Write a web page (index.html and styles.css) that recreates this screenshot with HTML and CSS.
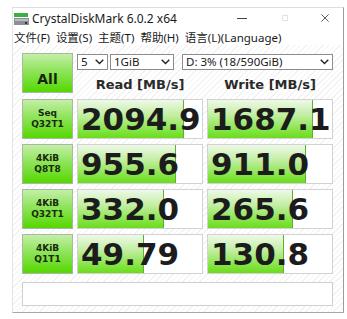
FILE: index.html
```html
<!DOCTYPE html>
<html lang="zh-CN">

<head>
  <meta charset="UTF-8">
  <meta name="viewport" content="width=device-width, initial-scale=1.0">
  <title>CrystalDiskMark 6.0.2 x64</title>
  <link rel="stylesheet" href="styles.css">
</head>

<body>
  <div class="window">
    <div class="titlebar">
      <svg class="app-icon" width="15" height="12" viewBox="0 0 15 12">
        <rect x="0" y="0" width="14" height="4" fill="#3cb043"/>
        <rect x="0" y="5" width="15" height="7" fill="#8a8f94"/>
        <rect x="1" y="6" width="13" height="2" fill="#b9bec2"/>
        <rect x="11" y="9" width="2" height="2" fill="#2f3338"/>
      </svg>
      <span class="title">CrystalDiskMark 6.0.2 x64</span>
      <div class="controls">
        <span class="ctl ctl-min"></span>
        <span class="ctl ctl-max"></span>
        <svg class="ctl-close" width="10" height="10" viewBox="0 0 10 10">
          <path d="M0.5 0.5 L9.5 9.5 M9.5 0.5 L0.5 9.5" stroke="#333" stroke-width="1"/>
        </svg>
      </div>
    </div>

    <div class="menubar">
      <span>文件(F)</span>
      <span>设置(S)</span>
      <span>主题(T)</span>
      <span>帮助(H)</span>
      <span>语言(L)(Language)</span>
    </div>

    <div class="content">
      <div class="top">
        <div class="all-button">All</div>
        <div class="top-right">
          <div class="selects">
            <div class="select select-count">5 <svg class="chevron" width="9" height="6" viewBox="0 0 9 6"><path d="M0.7 0.7 L4.5 4.5 L8.3 0.7" fill="none" stroke="#222" stroke-width="1.4"/></svg></div>
            <div class="select select-size">1GiB <svg class="chevron" width="9" height="6" viewBox="0 0 9 6"><path d="M0.7 0.7 L4.5 4.5 L8.3 0.7" fill="none" stroke="#222" stroke-width="1.4"/></svg></div>
            <div class="select select-drive">D: 3% (18/590GiB) <svg class="chevron" width="9" height="6" viewBox="0 0 9 6"><path d="M0.7 0.7 L4.5 4.5 L8.3 0.7" fill="none" stroke="#222" stroke-width="1.4"/></svg></div>
          </div>
          <div class="heads">
            <div class="head">Read [MB/s]</div>
            <div class="head">Write [MB/s]</div>
          </div>
        </div>
      </div>

      <div class="rows">
        <div class="label">Seq<br>Q32T1</div>
        <div class="value" style="--fill: 105px">2094.9</div>
        <div class="value" style="--fill: 104px">1687.1</div>

        <div class="label">4KiB<br>Q8T8</div>
        <div class="value" style="--fill: 97px">955.6</div>
        <div class="value" style="--fill: 97px">911.0</div>

        <div class="label">4KiB<br>Q32T1</div>
        <div class="value" style="--fill: 85px">332.0</div>
        <div class="value" style="--fill: 84px">265.6</div>

        <div class="label">4KiB<br>Q1T1</div>
        <div class="value" style="--fill: 65px">49.79</div>
        <div class="value" style="--fill: 75px">130.8</div>
      </div>

      <div class="comment"></div>
    </div>
  </div>
</body>

</html>
```

FILE: styles.css
```css
* {
  margin: 0;
  padding: 0;
  box-sizing: border-box;
}

body {
  font-family: 'Noto Sans', 'Noto Sans CJK SC', sans-serif;
  background: #ffffff;
  color: #222;
  width: 347px;
  height: 319px;
  overflow: hidden;
}

.window {
  margin: 7px 0 0 12px;
  width: 332px;
  height: 306px;
  border-top: 1px solid #dedede;
  border-left: 1px solid #e4e4e4;
  border-right: 1px solid #9c9c9c;
  border-bottom: 1px solid #a8a8a8;
  background: #ffffff;
}

/* title bar */
.titlebar {
  height: 20px;
  display: flex;
  align-items: center;
  padding-left: 1px;
}

.app-icon {
  margin-right: 3px;
  margin-top: 2px;
}

.title {
  font-size: 12px;
  color: #1a1a1a;
  margin-top: 1px;
}

.controls {
  margin-left: auto;
  display: flex;
  align-items: center;
  padding-right: 14px;
}

.ctl-min {
  width: 10px;
  height: 1px;
  background: #444;
  margin-right: 35px;
}

.ctl-max {
  width: 6px;
  height: 6px;
  border: 1px solid #e2e2e2;
  margin-right: 33px;
}

.ctl-close {
  display: block;
  width: 8px;
  height: 8px;
}

/* menu */
.menubar {
  height: 17px;
  display: flex;
  align-items: center;
  gap: 6px;
  padding-left: 1px;
  font-size: 11.5px;
  color: #1a1a1a;
}

/* main panel */
.content {
  height: 267px;
  padding: 8px 9px 0 9px;
  background: repeating-linear-gradient(135deg, #ffffff 0 3px, #f2f2f2 3px 4px);
}

.top {
  display: flex;
  gap: 4px;
  margin-bottom: 5px;
}

.all-button {
  width: 51px;
  height: 40px;
  border: 1px solid #a9b8a0;
  background: linear-gradient(to bottom, #c4efa8 0%, #8ee45a 45%, #55d800 100%);
  font-family: 'DejaVu Sans', sans-serif;
  font-weight: bold;
  font-size: 14px;
  color: #1a2410;
  display: flex;
  justify-content: center;
  align-items: flex-end;
  padding-bottom: 5px;
}

.top-right {
  width: 256px;
}

.selects {
  display: flex;
  margin-top: 1px;
  height: 16px;
}

.select {
  height: 16px;
  border: 1px solid #8c8c8c;
  background: #fff;
  font-size: 11.5px;
  line-height: 14px;
  padding-left: 3px;
  display: flex;
  align-items: center;
  color: #1a1a1a;
}

.chevron {
  margin-left: auto;
  margin-right: 3px;
}

.select-count {
  width: 31px;
  margin-right: 2px;
}

.select-size {
  width: 64px;
  margin-right: 8px;
}

.select-drive {
  width: 151px;
}

.heads {
  display: grid;
  grid-template-columns: 126px 126px;
  column-gap: 4px;
  height: 24px;
  align-items: center;
  padding-top: 4px;
}

.head {
  text-align: center;
  font-family: 'DejaVu Sans', sans-serif;
  font-weight: bold;
  font-size: 13px;
  color: #2a2a2a;
}

/* results */
.rows {
  display: grid;
  grid-template-columns: 51px 126px 126px;
  grid-auto-rows: 40px;
  column-gap: 4px;
  row-gap: 5px;
}

.label {
  border: 1px solid #a9b8a0;
  background: linear-gradient(to bottom, #c4efa8 0%, #8ee45a 45%, #55d800 100%);
  font-family: 'DejaVu Sans', sans-serif;
  font-weight: bold;
  font-size: 9px;
  line-height: 11px;
  color: #1a2a0c;
  display: flex;
  align-items: center;
  justify-content: center;
  text-align: center;
}

.value {
  border: 1px solid #d2d2d2;
  background:
    linear-gradient(#5fae35, #5fae35) var(--fill) 0 / 1px 100% no-repeat,
    linear-gradient(to bottom, #eef9e8 0%, #c2eea2 40%, #7ee23a 85%, #6cdc1c 100%) 0 0 / var(--fill) 100% no-repeat,
    #ffffff;
  font-family: 'DejaVu Sans', sans-serif;
  font-weight: bold;
  font-size: 31px;
  color: #1c1c1c;
  display: flex;
  align-items: center;
  padding-left: 3px;
  padding-bottom: 1px;
  white-space: nowrap;
  overflow: hidden;
}

.comment {
  margin-top: 8px;
  width: 311px;
  height: 24px;
  border: 1px solid #cfcfcf;
  background: #ffffff;
}
```
